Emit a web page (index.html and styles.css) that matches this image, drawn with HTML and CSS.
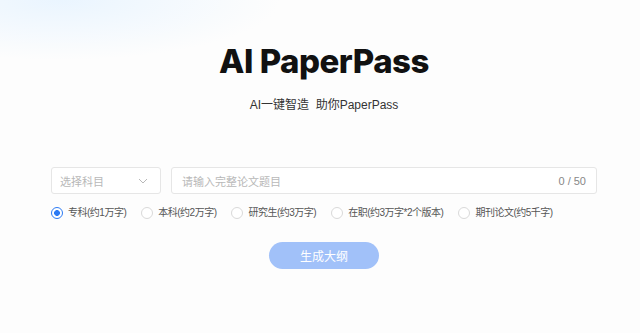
FILE: index.html
```html
<!DOCTYPE html>
<html lang="zh-CN">
<head>
  <meta charset="UTF-8">
  <meta name="viewport" content="width=device-width, initial-scale=1.0">
  <title>AI PaperPass</title>
  <link rel="stylesheet" href="styles.css">
</head>
<body>
  <div class="page">
    <h1 class="title">AI PaperPass</h1>
    <p class="subtitle">AI一键智造&nbsp;&nbsp;助你PaperPass</p>

    <div class="form-row">
      <div class="select">
        <span class="placeholder">选择科目</span>
        <svg class="chevron" width="10" height="6" viewBox="0 0 10 6">
          <path d="M1 1l4 4 4-4" fill="none" stroke="#b8b8b8" stroke-width="1"/>
        </svg>
      </div>
      <div class="input">
        <span class="placeholder">请输入完整论文题目</span>
        <span class="count">0 / 50</span>
      </div>
    </div>

    <div class="radios">
      <label class="radio checked"><span class="dot"></span>专科(约1万字)</label>
      <label class="radio"><span class="dot"></span>本科(约2万字)</label>
      <label class="radio"><span class="dot"></span>研究生(约3万字)</label>
      <label class="radio"><span class="dot"></span>在职(约3万字*2个版本)</label>
      <label class="radio"><span class="dot"></span>期刊论文(约5千字)</label>
    </div>

    <button class="submit">生成大纲</button>
  </div>
</body>
</html>
```

FILE: styles.css
```css
html, body {
  margin: 0;
  height: 100%;
}
body {
  font-family: "Liberation Sans", "Noto Sans CJK SC", sans-serif;
  background:
    radial-gradient(ellipse 220px 60px at 60px 0, rgba(232, 244, 255, 0.9), rgba(255, 255, 255, 0) 100%),
    #fdfdfd;
  color: #333;
}
.page {
  width: 546px;
  margin-left: 51px;
  padding-top: 38px;
  display: flex;
  flex-direction: column;
  align-items: center;
}
.title {
  margin: 0;
  font-family: Inter, "Liberation Sans", sans-serif;
  font-weight: 800;
  font-size: 33px;
  letter-spacing: -0.5px;
  color: #111;
  line-height: 46px;
}
.subtitle {
  margin: 12px 0 0;
  font-size: 12px;
  line-height: 18px;
  color: #333;
}
.form-row {
  align-self: stretch;
  display: flex;
  gap: 10px;
  margin-top: 53px;
}
.select, .input {
  height: 27px;
  box-sizing: border-box;
  border: 1px solid #e6e6e6;
  border-radius: 3px;
  background: #fff;
  display: flex;
  align-items: center;
  justify-content: space-between;
  padding: 0 10px 0 8px;
  font-size: 11px;
}
.select {
  width: 110px;
}
.input {
  flex: 1;
  padding-left: 10px;
}
.placeholder {
  color: #b8b8b8;
}
.count {
  color: #888;
}
.chevron {
  margin-right: 2px;
}
.radios {
  align-self: stretch;
  display: flex;
  gap: 15px;
  margin-top: 12px;
  font-size: 10px;
  letter-spacing: -0.5px;
  color: #555;
  white-space: nowrap;
}
.radio {
  display: flex;
  align-items: center;
  gap: 5px;
  line-height: 14px;
}
.dot {
  width: 12px;
  height: 12px;
  box-sizing: border-box;
  border: 1px solid #d9d9d9;
  border-radius: 50%;
  background: #fff;
  display: inline-block;
}
.radio.checked .dot {
  border-color: #2d7bf4;
  background: radial-gradient(circle, #2d7bf4 0 2.6px, #fff 3.2px);
}
.submit {
  margin-top: 22px;
  width: 110px;
  height: 27px;
  border: none;
  border-radius: 14px;
  background: #a1c1f9;
  color: #fff;
  font-family: "Liberation Sans", "Noto Sans CJK SC", sans-serif;
  font-size: 12px;
}
```
